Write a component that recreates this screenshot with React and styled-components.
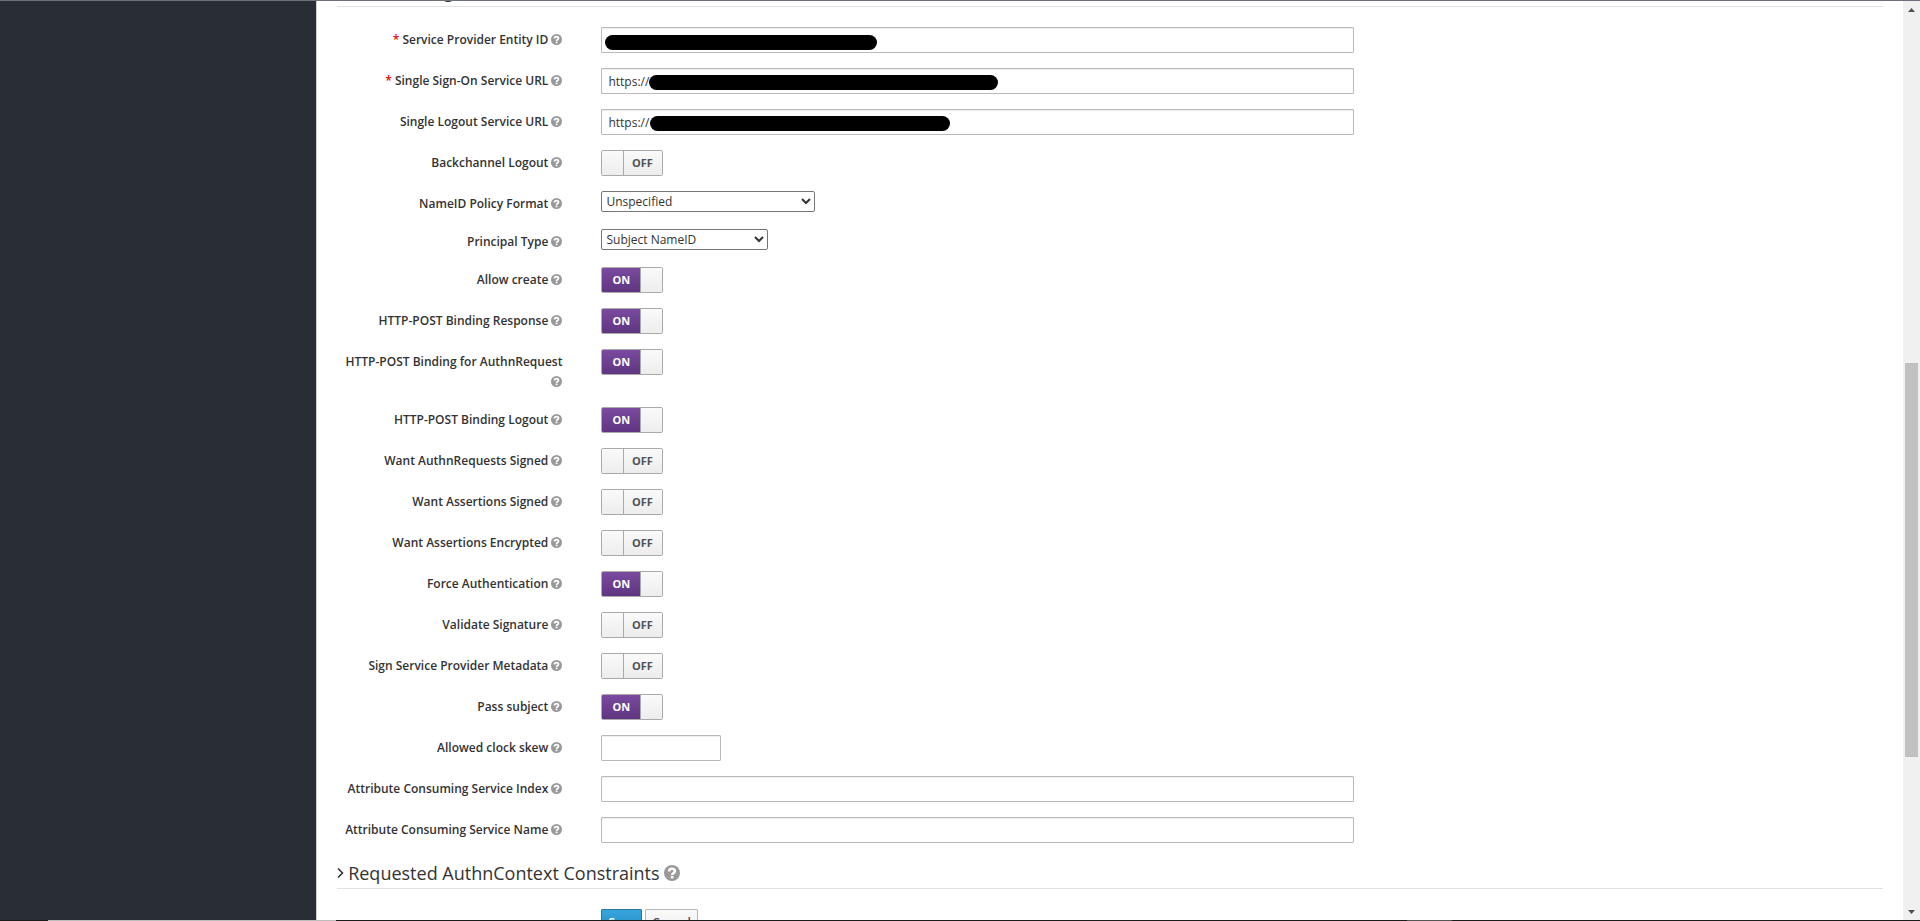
import React from "react";
import styled, { createGlobalStyle } from "styled-components";

const GlobalStyle = createGlobalStyle`
  *, *::before, *::after { box-sizing: border-box; }
  body {
    margin: 0;
    background: #fff;
    color: #333;
    font: 12px/20px "Open Sans", "Liberation Sans", sans-serif;
  }
`;

const Shell = styled.div`
  display: flex;
  height: 100vh;
  overflow: hidden;
  flex-direction: column;
`;

const TopEdge = styled.div`
  flex: none;
  height: 1px;
  background: #6d727a;
`;

const BottomEdge = styled.div`
  flex: none;
  display: flex;
  height: 1px;
  background: #1c1c1c;
`;

const EdgePiece = styled.span`
  width: ${(p) => p.$width};
  background: ${(p) => p.$color || "transparent"};
`;

const Body = styled.div`
  flex: 1;
  min-height: 0;
  display: flex;
`;

const Page = styled.div`
  flex: 1;
  min-width: 0;
  display: flex;
`;

const Sidebar = styled.nav`
  flex: none;
  width: 16.6667%;
  background: #292e34;
  border-right: 1px solid #d1d1d1;
`;

const Main = styled.main`
  flex: 1;
  min-width: 0;
  overflow: hidden;
  padding: 0 20px;
`;

const Form = styled.form`
  margin-top: -25px;
`;

const Section = styled.fieldset`
  margin: 0;
  padding: 0;
  border: 0;
  min-width: 0;
`;

const Legend = styled.legend`
  display: flex;
  align-items: center;
  gap: 4px;
  width: 100%;
  height: 31px;
  margin: 0 0 20px;
  padding: 0;
  border-bottom: 1px solid #e1e1e1;
  font-size: 18px;
  line-height: 30px;
`;

const Row = styled.div`
  display: grid;
  grid-template-columns: 2fr 6fr 4fr;
  margin: 0 -20px 15px;
`;

const LabelCell = styled.div`
  padding: 3px 19px 0 20px;
  text-align: right;
`;

const Label = styled.label`
  font-weight: 600;
`;

const Required = styled.span`
  color: #e00;
`;

const ControlCell = styled.div`
  position: relative;
  display: flex;
  align-items: flex-start;
  gap: 3px;
  padding: 0 20px;
  max-height: 26px;
`;

const TextField = styled.input`
  width: ${(p) => p.$width || "100%"};
  height: 26px;
  padding: 2px 6px;
  border: 1px solid #bababa;
  border-radius: 1px;
  box-shadow: inset 0 1px 1px rgba(3, 3, 3, 0.075);
  background: #fff;
  color: #333;
  font: inherit;
`;

const Redaction = styled.span`
  position: absolute;
  top: ${(p) => p.$top}px;
  left: ${(p) => p.$left}px;
  width: ${(p) => p.$width}px;
  height: 15px;
  border-radius: 8px;
  background: #000;
`;

const Select = styled.select`
  width: ${(p) => p.$width}px;
  height: 21px;
  padding: 0;
  border: 1px solid #767676;
  border-radius: 2px;
  background: #fff;
  color: #333;
  font: inherit;
  line-height: 16px;
`;

const Switch = styled.label`
  position: relative;
  display: flex;
  width: 62px;
  height: 26px;
  overflow: hidden;
  border: 1px solid #aaa;
  border-radius: 2px;
`;

const SwitchInput = styled.input`
  position: absolute;
  inset: 0;
  width: 100%;
  height: 100%;
  margin: 0;
  opacity: 0;
  cursor: pointer;
`;

const SwitchText = styled.span`
  flex: 1;
  padding-right: ${(p) => (p.$on ? 0 : 2)}px;
  background: ${(p) => (p.$on ? "linear-gradient(#7a4a9f, #5f3580)" : "linear-gradient(#fafafa, #ececec)")};
  color: ${(p) => (p.$on ? "#fff" : "#4d5258")};
  font-size: 11px;
  font-weight: 700;
  line-height: 24px;
  text-align: center;
`;

const SwitchHandle = styled.span`
  width: 22px;
  background: linear-gradient(#fafafa, #ededed);
  order: ${(p) => (p.$on ? 1 : -1)};
  border: 0 solid #aaa;
  border-width: ${(p) => (p.$on ? "0 0 0 1px" : "0 1px 0 0")};
`;

const Button = styled.button`
  height: 26px;
  padding: 3px 6px 1px;
  border: 1px solid ${(p) => (p.$primary ? "#21799c" : "#b7b7b7")};
  border-radius: 1px;
  background: ${(p) => (p.$primary ? "linear-gradient(#39a5dc, #1d88c4)" : "linear-gradient(#fafafa, #ededed)")};
  color: ${(p) => (p.$primary ? "#fff" : "#4d5258")};
  font: inherit;
  font-weight: 600;
`;

const HelpSvg = styled.svg`
  flex: none;
  width: ${(p) => p.$size}px;
  height: ${(p) => p.$size}px;
  vertical-align: -1px;
`;

const ScrollTrack = styled.div`
  flex: none;
  display: flex;
  flex-direction: column;
  align-items: center;
  width: 17px;
  background: #f0f0f0;
`;

const ScrollThumb = styled.div`
  width: 13px;
  flex: 394;
  background: #c1c1c1;
`;

const TrackGap = styled.div`
  flex: ${(p) => p.$grow};
`;

const ArrowSvg = styled.svg`
  flex: none;
  width: 17px;
  height: 17px;
`;

function Help({ size = 11 }) {
  return (
    <HelpSvg $size={size} viewBox="0 0 22 22" aria-hidden="true">
      <circle cx="11" cy="11" r="11" fill="#999" />
      <path d="M7 8.800C7 6.200 8.700 5.200 11 5.200s4 1.200 4 3.300c0 2.700-3.800 2.500-3.800 5.300" fill="none" stroke="#fff" strokeWidth="3.500" />
      <rect x="9.400" y="15.200" width="3.600" height="3.200" fill="#fff" />
    </HelpSvg>
  );
}

function Chevron() {
  return (
    <svg width="7" height="12" viewBox="0 0 7 12" aria-hidden="true">
      <path d="M1 1.500 5.500 6 1 10.500" fill="none" stroke="#333" strokeWidth="1.600" />
    </svg>
  );
}

function Arrow({ down }) {
  return (
    <ArrowSvg viewBox="0 0 17 17" aria-hidden="true">
      <path d={down ? "M5 7h7L8.500 11z" : "M5 11h7L8.500 7z"} fill="#505050" />
    </ArrowSvg>
  );
}

function Toggle({ id, on }) {
  const [checked, setChecked] = React.useState(Boolean(on));
  return (
    <Switch>
      <SwitchText $on={checked}>{checked ? "ON" : "OFF"}</SwitchText>
      <SwitchHandle $on={checked} />
      <SwitchInput id={id} type="checkbox" checked={checked} onChange={(e) => setChecked(e.target.checked)} />
    </Switch>
  );
}

const fields = [
  { id: "entityId", label: "Service Provider Entity ID", required: true, type: "text", bar: { top: 8, left: 24, width: 272 } },
  { id: "ssoUrl", label: "Single Sign-On Service URL", required: true, type: "text", value: "https://", bar: { top: 7, left: 68, width: 349 } },
  { id: "logoutUrl", label: "Single Logout Service URL", type: "text", value: "https://", bar: { top: 7, left: 69, width: 300 } },
  { id: "backchannel", label: "Backchannel Logout", type: "toggle" },
  { id: "nameIdFormat", label: "NameID Policy Format", type: "select", value: "Unspecified", width: 214 },
  { id: "principalType", label: "Principal Type", type: "select", value: "Subject NameID", width: 167 },
  { id: "allowCreate", label: "Allow create", type: "toggle", on: true },
  { id: "postResponse", label: "HTTP-POST Binding Response", type: "toggle", on: true },
  { id: "postAuthn", label: "HTTP-POST Binding for AuthnRequest", type: "toggle", on: true },
  { id: "postLogout", label: "HTTP-POST Binding Logout", type: "toggle", on: true },
  { id: "authnSigned", label: "Want AuthnRequests Signed", type: "toggle" },
  { id: "assertSigned", label: "Want Assertions Signed", type: "toggle" },
  { id: "assertEncrypted", label: "Want Assertions Encrypted", type: "toggle" },
  { id: "forceAuthn", label: "Force Authentication", type: "toggle", on: true },
  { id: "validateSig", label: "Validate Signature", type: "toggle" },
  { id: "signMetadata", label: "Sign Service Provider Metadata", type: "toggle" },
  { id: "passSubject", label: "Pass subject", type: "toggle", on: true },
  { id: "clockSkew", label: "Allowed clock skew", type: "text", width: "120px" },
  { id: "serviceIndex", label: "Attribute Consuming Service Index", type: "text" },
  { id: "serviceName", label: "Attribute Consuming Service Name", type: "text" },
];

function Control({ field }) {
  if (field.type === "toggle") return <Toggle id={field.id} on={field.on} />;
  if (field.type === "select") {
    return (
      <Select id={field.id} $width={field.width}>
        <option>{field.value}</option>
      </Select>
    );
  }
  return (
    <>
      <TextField id={field.id} type="text" defaultValue={field.value} $width={field.width} />
      {field.bar && <Redaction $top={field.bar.top} $left={field.bar.left} $width={field.bar.width} />}
    </>
  );
}

function Field({ field }) {
  return (
    <Row>
      <LabelCell>
        <Label htmlFor={field.id}>
          {field.required && <Required>* </Required>}
          {field.label}
        </Label>{" "}
        <Help />
      </LabelCell>
      <ControlCell>
        <Control field={field} />
      </ControlCell>
    </Row>
  );
}

export default function App() {
  return (
    <Shell>
      <GlobalStyle />
      <TopEdge />
      <Body>
        <Page>
          <Sidebar />
          <Main>
            <Form onSubmit={(e) => e.preventDefault()}>
              <Section>
                <Legend>
                  <Chevron />
                  SAML Config
                  <Help size={16} />
                </Legend>
                {fields.map((f) => (
                  <Field key={f.id} field={f} />
                ))}
              </Section>
              <Section>
                <Legend>
                  <Chevron />
                  Requested AuthnContext Constraints
                  <Help size={16} />
                </Legend>
              </Section>
              <Row>
                <LabelCell />
                <ControlCell>
                  <Button type="submit" $primary>Save</Button>
                  <Button type="button">Cancel</Button>
                </ControlCell>
              </Row>
            </Form>
          </Main>
        </Page>
        <ScrollTrack>
          <Arrow />
          <TrackGap $grow={345} />
          <ScrollThumb />
          <TrackGap $grow={146} />
          <Arrow down />
        </ScrollTrack>
      </Body>
      <BottomEdge>
        <EdgePiece $width="2.5%" />
        <EdgePiece $width="15%" $color="#bdbdbd" />
        <EdgePiece $width="55.8%" />
        <EdgePiece $width="2.3%" $color="#555" />
      </BottomEdge>
    </Shell>
  );
}
